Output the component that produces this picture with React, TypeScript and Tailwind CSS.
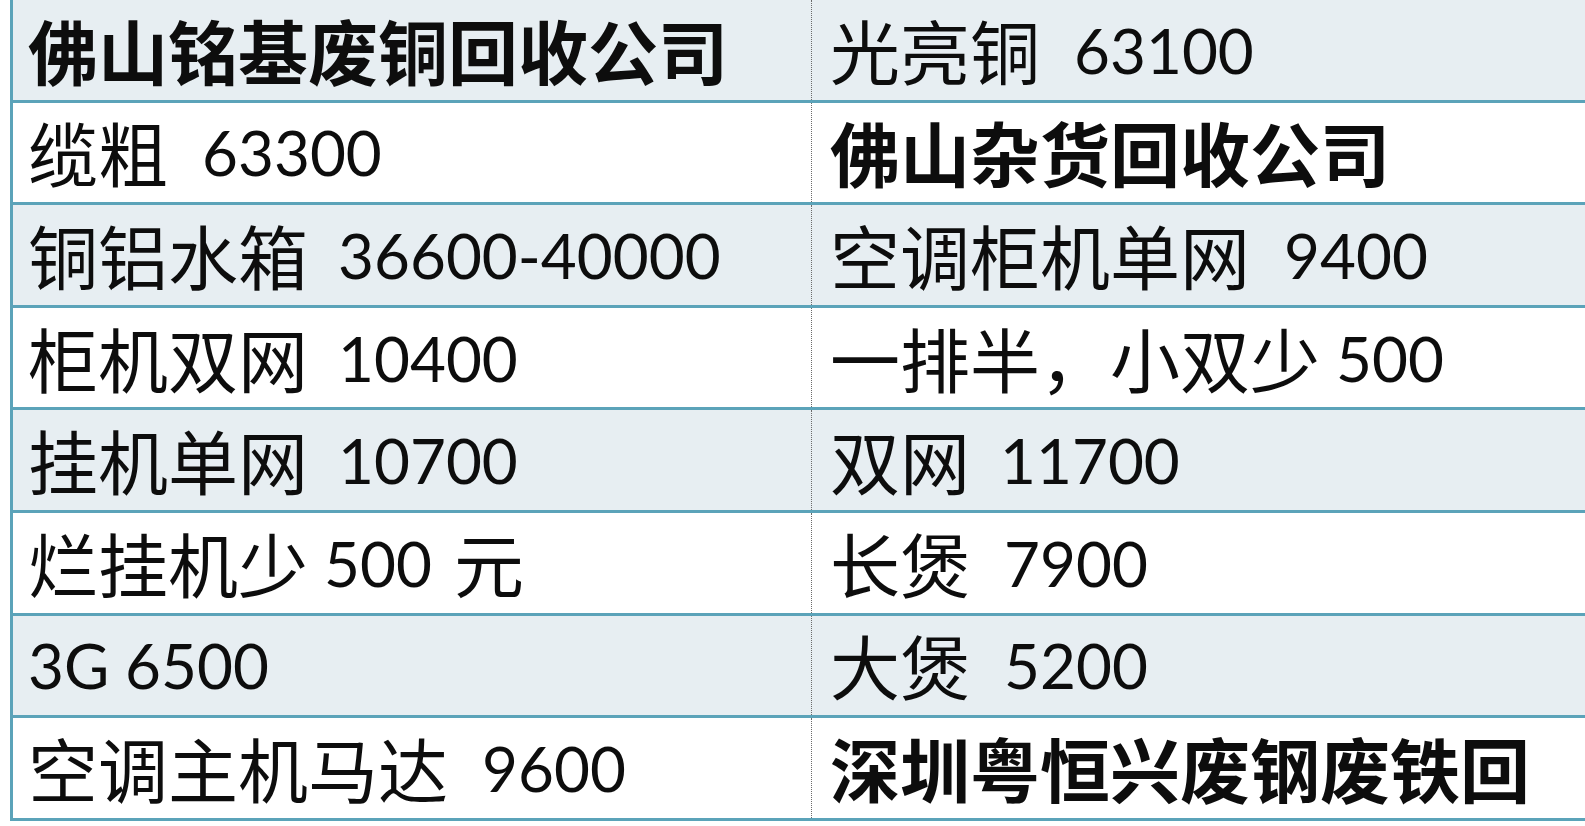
type Part = { t: string; num?: boolean; gap?: number };
type Cell = { parts: Part[]; bold?: boolean };

// price board rows: [left cell, right cell]
const rows: [Cell, Cell][] = [
  [
    { parts: [{ t: '佛山铭基废铜回收公司' }], bold: true },
    { parts: [{ t: '光亮铜' }, { t: '63100', num: true, gap: 34 }] },
  ],
  [
    { parts: [{ t: '缆粗' }, { t: '63300', num: true, gap: 34 }] },
    { parts: [{ t: '佛山杂货回收公司' }], bold: true },
  ],
  [
    { parts: [{ t: '铜铝水箱' }, { t: '36600-40000', num: true, gap: 30 }] },
    { parts: [{ t: '空调柜机单网' }, { t: '9400', num: true, gap: 34 }] },
  ],
  [
    { parts: [{ t: '柜机双网' }, { t: '10400', num: true, gap: 30 }] },
    { parts: [{ t: '一排半，小双少' }, { t: '500', num: true, gap: 16 }] },
  ],
  [
    { parts: [{ t: '挂机单网' }, { t: '10700', num: true, gap: 30 }] },
    { parts: [{ t: '双网' }, { t: '11700', num: true, gap: 30 }] },
  ],
  [
    { parts: [{ t: '烂挂机少' }, { t: '500', num: true, gap: 16 }, { t: '元', gap: 22 }] },
    { parts: [{ t: '长煲' }, { t: '7900', num: true, gap: 34 }] },
  ],
  [
    { parts: [{ t: '3G 6500', num: true }] },
    { parts: [{ t: '大煲' }, { t: '5200', num: true, gap: 34 }] },
  ],
  [
    { parts: [{ t: '空调主机马达' }, { t: '9600', num: true, gap: 34 }] },
    { parts: [{ t: '深圳粤恒兴废钢废铁回' }], bold: true },
  ],
];

function CellText({ cell }: { cell: Cell }) {
  return (
    <div className={`flex items-center whitespace-nowrap text-[#0d0d0d] ${cell.bold ? 'font-bold' : 'font-normal'}`}>
      {cell.parts.map((p, i) => (
        <span
          key={i}
          style={p.gap ? { marginLeft: p.gap } : undefined}
          className={
            p.num
              ? "font-['Lato','Noto_Sans_CJK_SC',sans-serif] text-[62px] leading-none"
              : "font-['Noto_Sans_CJK_SC',sans-serif] text-[70px] leading-none"
          }
        >
          {p.t}
        </span>
      ))}
    </div>
  );
}

export default function App() {
  return (
    <div className="w-[1585px] h-[826px] overflow-hidden bg-white pl-[10px]">
      <div className="border-l-[3px] border-[#5ba3b9]">
        {rows.map(([left, right], i) => (
          <div
            key={i}
            className={`flex h-[102.6px] box-border border-b-[3px] border-[#5ba3b9] ${
              i % 2 === 0 ? 'bg-[#e7eef2]' : 'bg-white'
            }`}
          >
            <div className="w-[799px] shrink-0 flex items-center pl-[15px] border-r border-dotted border-r-[#6b6b6b]">
              <CellText cell={left} />
            </div>
            <div className="flex-1 flex items-center pl-[18px]">
              <CellText cell={right} />
            </div>
          </div>
        ))}
      </div>
    </div>
  );
}
